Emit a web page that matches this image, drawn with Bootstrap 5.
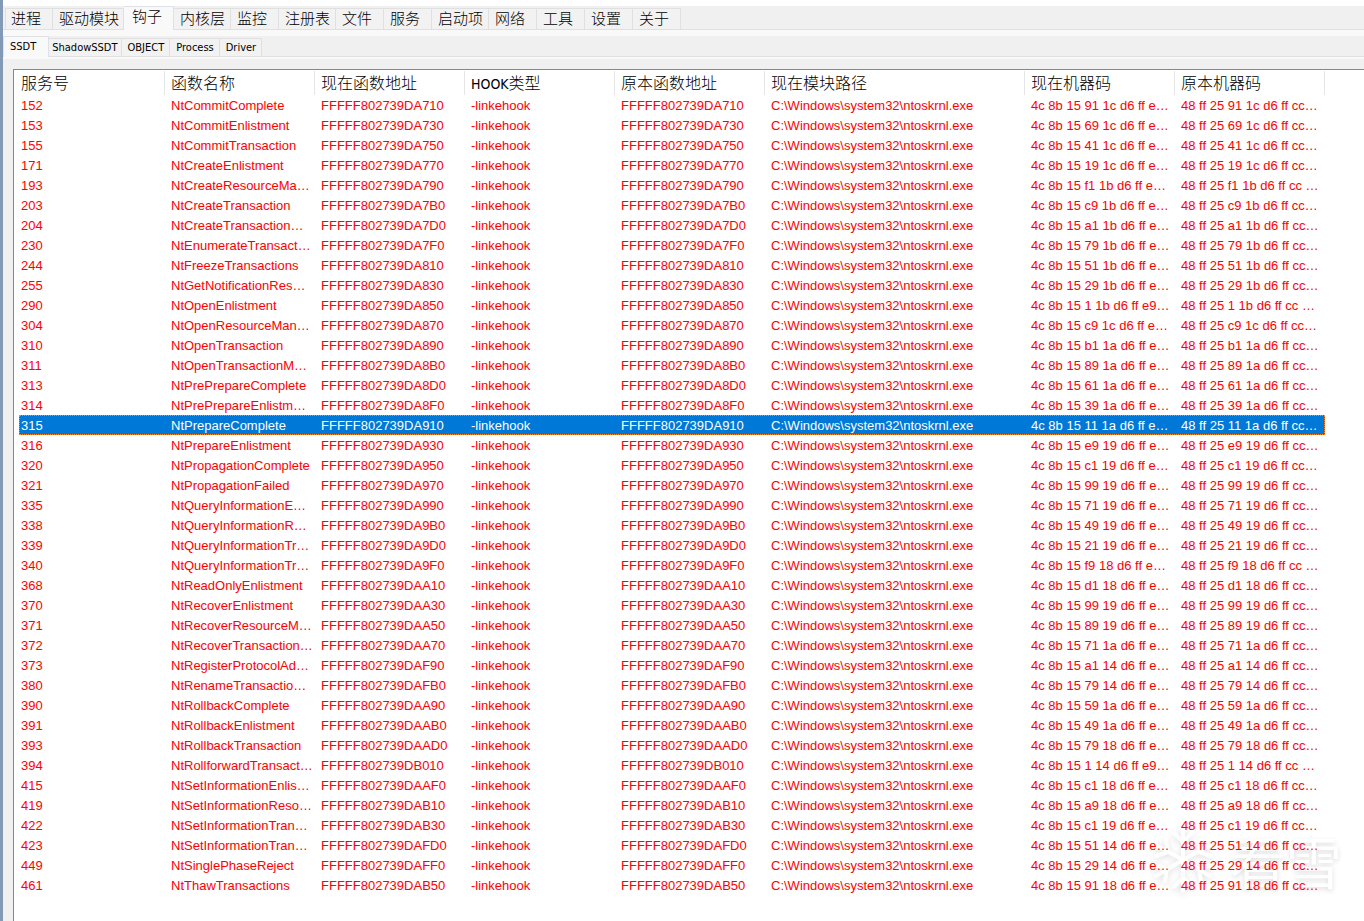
<!DOCTYPE html>
<html lang="zh-CN">
<head>
<meta charset="utf-8">
<meta name="viewport" content="width=device-width, initial-scale=1">
<title>SSDT</title>
<link href="https://cdn.jsdelivr.net/npm/bootstrap@5.3.0/dist/css/bootstrap.min.css" rel="stylesheet">
<script src="https://cdn.jsdelivr.net/npm/bootstrap@5.3.0/dist/js/bootstrap.bundle.min.js" defer></script>
<style>
  :root { --face: #f0f0f0; --tabline: #e0e0e0; --pane: #f9f9f9; }
  body { font-family: "Liberation Sans", "Noto Sans CJK SC", sans-serif; font-size: 13px; line-height: 20px; color: #000; background: #fff; }
  .app-frame { border-left: 3px solid #829ab6; padding-top: 6px; }
  .app-body { background: var(--face); }

  /* Tab strips */
  .tab-strip { --bs-nav-tabs-border-width: 0; border-bottom: 0; }
  .tab-strip .nav-link { margin: 0; padding: 0; color: #000; background: #f2f2f2; border: 1px solid var(--tabline); border-left-width: 0; border-radius: 0; text-align: left; white-space: nowrap; }
  .tab-strip .nav-item:first-child .nav-link { border-left-width: 1px; }
  .tab-strip .nav-link.active { color: #000; background: var(--pane); border-bottom: 0; }
  .main-tabs { height: 24px; padding-left: 2px; box-shadow: inset 0 -1px var(--tabline); }
  .main-tabs .nav-link { width: 48px; height: 22px; line-height: 18px; padding: 0 0 2px 6px; font-family: "Noto Sans CJK SC", sans-serif; font-size: 15px; font-weight: 300; }
  .main-tabs .nav-item:first-child .nav-link { padding-left: 5px; }
  .main-tabs .wide3 { width: 57px; }
  .main-tabs .wide4 { width: 71px; }
  .main-tabs .nav-link.active { width: 50px; height: 24px; padding: 0 0 6px 8px; }
  .sub-tabs { height: 21px; box-shadow: inset 0 -1px var(--tabline); }
  .sub-tabs .nav-link { height: 19px; line-height: 18px; padding: 0 5px 0 6px; font-family: "DejaVu Sans Condensed", sans-serif; font-size: 11px; }
  .sub-tabs .snug { padding: 0 3px; }
  .sub-tabs .nav-link.active { height: 21px; line-height: 17px; padding: 0 12px 2px 6px; }
  .pane-edge { height: 6px; background: var(--pane); }
  .pane-edge.thin { height: 2px; }

  /* Hook list */
  .list-pane { margin: 10px 0 0 10px; padding-left: 5px; border-top: 1px solid #828790; border-left: 1px solid #828790; background: #fff; min-height: calc(100vh - 69px); }
  .hooks { width: 1306px; table-layout: fixed; z-index: 1; }
  .hooks th, .hooks td { padding: 0 0 0 6px; white-space: nowrap; overflow: hidden; }
  .hooks th:first-child, .hooks td:first-child { padding-left: 2px; }
  .hooks th { height: 25px; padding-bottom: 2px; font-family: "Noto Sans CJK SC", sans-serif; font-size: 16px; font-weight: 300; line-height: 22px; background: linear-gradient(#e5e5e5, #e5e5e5) right 0 top 1px / 1px 24px no-repeat; }
  .hooks th .latin { font-family: "DejaVu Sans Condensed", sans-serif; font-size: 14px; line-height: 16px; }
  .hooks td { height: 20px; padding-top: 2px; line-height: 18px; color: #f00; }
  .hooks .chosen td { background: #0078d7; color: #fff; }
  .hooks .chosen { outline: 1px dotted #ff8728; outline-offset: -1px; }

  .watermark { right: 22px; bottom: 26px; pointer-events: none; color: #fff; font-family: "Noto Sans CJK SC", sans-serif; font-size: 56px; line-height: 70px; text-shadow: 0 2px 5px rgba(0,0,0,.14); }
  .watermark svg { filter: drop-shadow(0 2px 3px rgba(0,0,0,.12)); }
</style>
</head>
<body>
<main class="app-frame position-relative min-vh-100">
  <div class="app-body">
    <ul class="nav nav-tabs tab-strip main-tabs flex-nowrap align-items-end">
      <li class="nav-item"><button type="button" class="nav-link">进程</button></li>
      <li class="nav-item"><button type="button" class="nav-link wide4">驱动模块</button></li>
      <li class="nav-item"><button type="button" class="nav-link active">钩子</button></li>
      <li class="nav-item"><button type="button" class="nav-link wide3">内核层</button></li>
      <li class="nav-item"><button type="button" class="nav-link">监控</button></li>
      <li class="nav-item"><button type="button" class="nav-link wide3">注册表</button></li>
      <li class="nav-item"><button type="button" class="nav-link">文件</button></li>
      <li class="nav-item"><button type="button" class="nav-link">服务</button></li>
      <li class="nav-item"><button type="button" class="nav-link wide3">启动项</button></li>
      <li class="nav-item"><button type="button" class="nav-link">网络</button></li>
      <li class="nav-item"><button type="button" class="nav-link">工具</button></li>
      <li class="nav-item"><button type="button" class="nav-link">设置</button></li>
      <li class="nav-item"><button type="button" class="nav-link">关于</button></li>
    </ul>
    <div class="pane-edge"></div>
    <ul class="nav nav-tabs tab-strip sub-tabs flex-nowrap align-items-end">
      <li class="nav-item"><button type="button" class="nav-link active">SSDT</button></li>
      <li class="nav-item"><button type="button" class="nav-link snug">ShadowSSDT</button></li>
      <li class="nav-item"><button type="button" class="nav-link">OBJECT</button></li>
      <li class="nav-item"><button type="button" class="nav-link">Process</button></li>
      <li class="nav-item"><button type="button" class="nav-link">Driver</button></li>
    </ul>
    <div class="pane-edge thin"></div>
    <div class="overflow-hidden">
      <div class="list-pane">
        <table class="hooks position-relative">
          <colgroup><col style="width:146px"><col style="width:150px"><col style="width:150px"><col style="width:150px"><col style="width:150px"><col style="width:260px"><col style="width:150px"><col style="width:150px"></colgroup>
          <thead><tr><th scope="col">服务号</th><th scope="col">函数名称</th><th scope="col">现在函数地址</th><th scope="col"><span class="latin">HOOK</span>类型</th><th scope="col">原本函数地址</th><th scope="col">现在模块路径</th><th scope="col">现在机器码</th><th scope="col">原本机器码</th></tr></thead>
          <tbody id="rows"></tbody>
        </table>
      </div>
    </div>
  </div>
  <div class="watermark position-absolute d-flex align-items-center">
    <svg width="78" height="70" viewBox="0 0 78 70" fill="none" stroke="#fff" stroke-width="4" stroke-linecap="round" stroke-linejoin="round" aria-hidden="true">
      <path d="M31 35V4M22 8l9 9 9-9M31 35v31M22 62l9-9 9 9"/>
      <path d="M31 35L4 20M4 31l12-4-2-12M31 35L4 51M3 40l12 4-2 12"/>
      <path d="M31 35L58 51M59 40l-12 4 2 12M31 35l27-15M59 31l-12-4 2-12"/>
    </svg>
    <span>看雪</span>
  </div>
</main>
<script>
  // number | function name | address tail | bytes 4-5 of the hooked code
  const hooks = `152|NtCommitComplete|DA710|91 1c
153|NtCommitEnlistment|DA730|69 1c
155|NtCommitTransaction|DA750|41 1c
171|NtCreateEnlistment|DA770|19 1c
193|NtCreateResourceMa…|DA790|f1 1b
203|NtCreateTransaction|DA7B0|c9 1b
204|NtCreateTransaction…|DA7D0|a1 1b
230|NtEnumerateTransact…|DA7F0|79 1b
244|NtFreezeTransactions|DA810|51 1b
255|NtGetNotificationRes…|DA830|29 1b
290|NtOpenEnlistment|DA850|1 1b
304|NtOpenResourceMan…|DA870|c9 1c
310|NtOpenTransaction|DA890|b1 1a
311|NtOpenTransactionM…|DA8B0|89 1a
313|NtPrePrepareComplete|DA8D0|61 1a
314|NtPrePrepareEnlistm…|DA8F0|39 1a
315|NtPrepareComplete|DA910|11 1a
316|NtPrepareEnlistment|DA930|e9 19
320|NtPropagationComplete|DA950|c1 19
321|NtPropagationFailed|DA970|99 19
335|NtQueryInformationE…|DA990|71 19
338|NtQueryInformationR…|DA9B0|49 19
339|NtQueryInformationTr…|DA9D0|21 19
340|NtQueryInformationTr…|DA9F0|f9 18
368|NtReadOnlyEnlistment|DAA10|d1 18
370|NtRecoverEnlistment|DAA30|99 19
371|NtRecoverResourceM…|DAA50|89 19
372|NtRecoverTransaction…|DAA70|71 1a
373|NtRegisterProtocolAd…|DAF90|a1 14
380|NtRenameTransactio…|DAFB0|79 14
390|NtRollbackComplete|DAA90|59 1a
391|NtRollbackEnlistment|DAAB0|49 1a
393|NtRollbackTransaction|DAAD0|79 18
394|NtRollforwardTransact…|DB010|1 14
415|NtSetInformationEnlis…|DAAF0|c1 18
419|NtSetInformationReso…|DAB10|a9 18
422|NtSetInformationTran…|DAB30|c1 19
423|NtSetInformationTran…|DAFD0|51 14
449|NtSinglePhaseReject|DAFF0|29 14
461|NtThawTransactions|DAB50|91 18`;

  document.getElementById('rows').innerHTML = hooks.split('\n').map(line => {
    const [num, name, tail, bytes] = line.split('|');
    const address = 'FFFFF802739' + tail;
    const jump = /^1 /.test(bytes) ? 'e9…' : 'e…';
    const pad = /^(1|f1|f9) /.test(bytes) ? 'cc …' : 'cc…';
    const cells = [num, name, address, '-linkehook', address, 'C:\\Windows\\system32\\ntoskrnl.exe',
      `4c 8b 15 ${bytes} d6 ff ${jump}`, `48 ff 25 ${bytes} d6 ff ${pad}`];
    return `<tr${num === '315' ? ' class="chosen"' : ''}>${cells.map(c => `<td>${c}</td>`).join('')}</tr>`;
  }).join('');
</script>
</body>
</html>
